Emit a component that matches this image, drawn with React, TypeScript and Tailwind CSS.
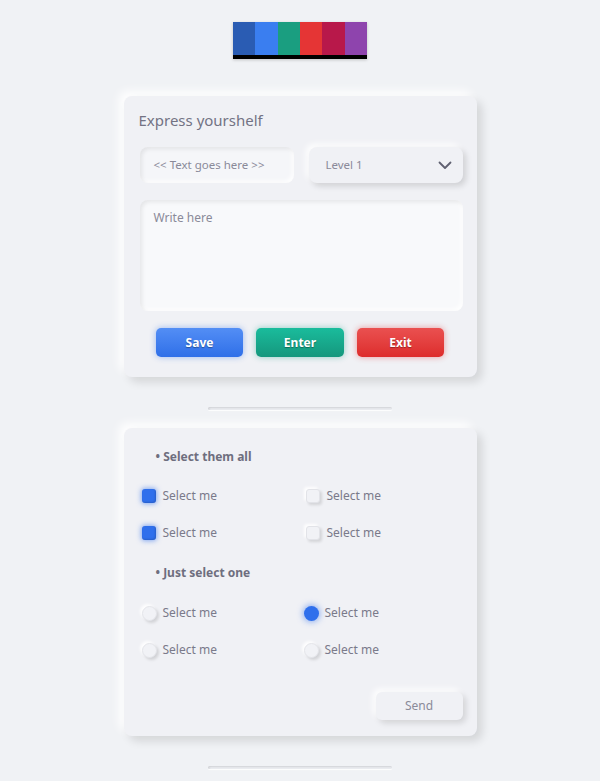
import React from 'react';

const palette = ['#2a5cb3', '#3a7ef0', '#1a9e80', '#e53535', '#b8184a', '#8e44ad'];

function Checkbox({ checked, label }: { checked?: boolean; label: string }) {
  return (
    <label className="flex items-center gap-[7px] h-[20px]">
      {checked ? (
        <span className="w-[14px] h-[14px] rounded-[3px] bg-[#2f6fec] shadow-[0_0_5px_1px_rgba(47,111,236,0.55),inset_-1px_-1px_2px_rgba(0,0,0,0.15)]" />
      ) : (
        <span className="w-[14px] h-[14px] rounded-[3px] bg-[#f1f2f6] border border-[#e2e3e8] shadow-[2px_2px_3px_rgba(0,0,0,0.12),-2px_-2px_3px_rgba(255,255,255,0.9)]" />
      )}
      <span className="text-[12px] text-[#7a7a8a]">{label}</span>
    </label>
  );
}

function Radio({ checked, label }: { checked?: boolean; label: string }) {
  return (
    <label className="flex items-center gap-[6px] h-[20px]">
      {checked ? (
        <span className="w-[15px] h-[15px] rounded-full bg-[#2f6fec] shadow-[0_0_6px_1px_rgba(47,111,236,0.55)]" />
      ) : (
        <span className="w-[15px] h-[15px] rounded-full bg-[#f1f2f6] border border-[#e4e5ea] shadow-[2px_2px_3px_rgba(0,0,0,0.13),-2px_-2px_3px_rgba(255,255,255,0.9)]" />
      )}
      <span className="text-[12px] text-[#7a7a8a]">{label}</span>
    </label>
  );
}

function Divider() {
  return (
    <div className="w-[184px] h-[3px] rounded-full bg-[#eceef2] shadow-[inset_1px_1px_2px_rgba(0,0,0,0.12),0_1px_1px_rgba(255,255,255,0.9)]" />
  );
}

export default function App() {
  return (
    <div
      className="min-h-[781px] w-full bg-[#f0f2f5] flex flex-col items-center pt-[22px]"
      style={{ fontFamily: '"Noto Sans", "Open Sans", sans-serif' }}
    >
      {/* palette */}
      <div className="flex flex-col w-[134px] shadow-[0_1px_3px_rgba(0,0,0,0.2)]">
        <div className="flex h-[33px]">
          {palette.map((c) => (
            <div key={c} className="flex-1" style={{ backgroundColor: c }} />
          ))}
        </div>
        <div className="h-[4px] bg-black" />
      </div>

      {/* card 1 */}
      <div className="mt-[37px] w-[353px] rounded-[8px] bg-[#f0f1f5] pl-4 pr-[14px] pt-[13px] pb-[20px] shadow-[5px_5px_10px_rgba(0,0,0,0.12),-5px_-5px_10px_rgba(255,255,255,0.95)]">
        <h2 className="text-[15px] text-[#737384] leading-[22px] -ml-[1px]">Express yourshelf</h2>
        <div className="mt-[16px] flex gap-[15px]">
          <div className="w-[154px] h-[36px] rounded-[8px] bg-[#f5f6f9] flex items-center pl-[14px] shadow-[inset_2px_2px_4px_rgba(0,0,0,0.08),inset_-2px_-2px_4px_rgba(255,255,255,0.95)]">
            <span className="text-[11.5px] text-[#8a8a99]">&lt;&lt; Text goes here &gt;&gt;</span>
          </div>
          <div className="w-[154px] h-[36px] rounded-[8px] bg-[#f0f1f5] flex items-center justify-between pl-[17px] pr-[11px] shadow-[3px_3px_6px_rgba(0,0,0,0.14),-3px_-3px_6px_rgba(255,255,255,0.95)]">
            <span className="text-[11.5px] text-[#8a8a99]">Level 1</span>
            <svg width="14" height="9" viewBox="0 0 14 9" fill="none">
              <path d="M1.5 1.5 L7 7 L12.5 1.5" stroke="#5f6070" strokeWidth="1.8" strokeLinecap="round" strokeLinejoin="round" />
            </svg>
          </div>
        </div>
        <div className="mt-[17px] h-[111px] rounded-[8px] bg-[#f8f9fb] pl-[14px] pt-[4px] shadow-[inset_2px_2px_4px_rgba(0,0,0,0.08),inset_-2px_-2px_4px_rgba(255,255,255,0.95)]">
          <span className="text-[12px] text-[#8a8a99]">Write here</span>
        </div>
        <div className="mt-[17px] flex justify-center gap-[13px] pr-[2px]">
          <button className="w-[87px] h-[29px] rounded-[5px] bg-gradient-to-b from-[#538ef5] to-[#2f6fe8] text-white text-[12px] font-bold [text-shadow:0_1px_1px_rgba(0,0,0,0.35)] shadow-[0_0_6px_rgba(47,111,232,0.45)]">
            Save
          </button>
          <button className="w-[88px] h-[29px] rounded-[5px] bg-gradient-to-b from-[#1abc9c] to-[#15977d] text-white text-[12px] font-bold [text-shadow:0_1px_1px_rgba(0,0,0,0.35)] shadow-[0_0_6px_rgba(22,160,133,0.45)]">
            Enter
          </button>
          <button className="w-[87px] h-[29px] rounded-[5px] bg-gradient-to-b from-[#ea5050] to-[#dd2b2b] text-white text-[12px] font-bold [text-shadow:0_1px_1px_rgba(0,0,0,0.35)] shadow-[0_0_6px_rgba(221,43,43,0.45)]">
            Exit
          </button>
        </div>
      </div>

      <div className="mt-[30px]">
        <Divider />
      </div>

      {/* card 2 */}
      <div className="mt-[18px] w-[353px] rounded-[8px] bg-[#f0f1f5] pl-[18px] pr-[14px] pt-[20px] pb-[16px] shadow-[5px_5px_10px_rgba(0,0,0,0.12),-5px_-5px_10px_rgba(255,255,255,0.95)]">
        <div className="pl-[14px] text-[12px] font-bold text-[#6e6e7e] leading-[18px]">• Select them all</div>
        <div className="mt-[20px] grid grid-cols-[164px_1fr] gap-y-[17px]">
          <Checkbox checked label="Select me" />
          <Checkbox label="Select me" />
          <Checkbox checked label="Select me" />
          <Checkbox label="Select me" />
        </div>
        <div className="mt-[21px] pl-[14px] text-[12px] font-bold text-[#6e6e7e] leading-[18px]">• Just select one</div>
        <div className="mt-[21px] grid grid-cols-[162px_1fr] gap-y-[17px]">
          <Radio label="Select me" />
          <Radio checked label="Select me" />
          <Radio label="Select me" />
          <Radio label="Select me" />
        </div>
        <div className="mt-[32px] flex justify-end">
          <button className="w-[87px] h-[28px] rounded-[6px] bg-[#f0f1f5] text-[12px] text-[#8a8a99] shadow-[3px_3px_6px_rgba(0,0,0,0.13),-3px_-3px_6px_rgba(255,255,255,0.95)]">
            Send
          </button>
        </div>
      </div>

      <div className="mt-[30px] pb-[12px]">
        <Divider />
      </div>
    </div>
  );
}
